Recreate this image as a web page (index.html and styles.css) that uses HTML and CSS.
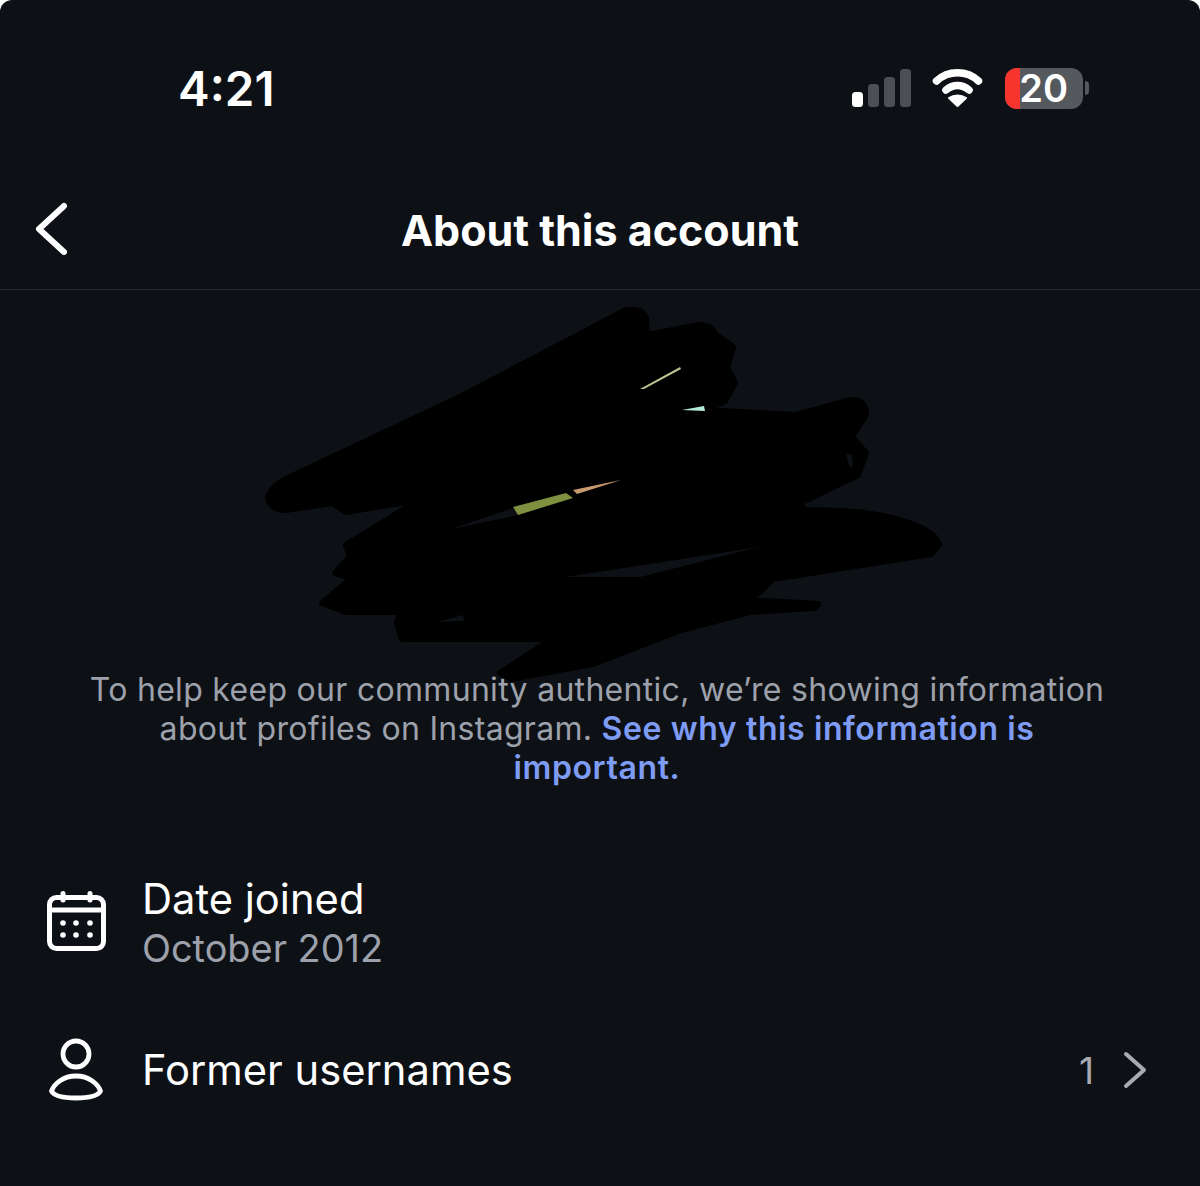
FILE: index.html
```html
<!DOCTYPE html>
<html lang="en">
<head>
    <meta charset="UTF-8">
    <meta name="viewport" content="width=device-width, initial-scale=1.0">
    <title>About this account</title>
    <link rel="stylesheet" href="styles.css">
</head>
<body>
    <div class="screen">
        <header class="status-bar">
            <span class="clock">4:21</span>
            <div class="status-icons">
                <svg class="signal" width="60" height="38" viewBox="0 0 60 38">
                    <rect x="0" y="23" width="11" height="15" rx="3.5" fill="#fff"/>
                    <rect x="16" y="15" width="11" height="23" rx="3.5" fill="#4c4f53"/>
                    <rect x="32" y="8" width="11" height="30" rx="3.5" fill="#4c4f53"/>
                    <rect x="48" y="0" width="11" height="38" rx="3.5" fill="#4c4f53"/>
                </svg>
                <svg class="wifi" width="53" height="38" viewBox="0 0 53 38">
                    <path d="M4.5 12 C16 1 35 1 46.5 12" fill="none" stroke="#fff" stroke-width="7.5" stroke-linecap="round"/>
                    <path d="M14 21 C21 15 30 15 37 21" fill="none" stroke="#fff" stroke-width="7.5" stroke-linecap="round"/>
                    <path d="M17 29 C22 25.5 29 25.5 34 29 L25.5 37 Z" fill="#fff" stroke="#fff" stroke-width="2" stroke-linejoin="round"/>
                </svg>
                <div class="battery">
                    <div class="battery-body">
                        <span class="battery-level"></span>
                        <span class="battery-text">20</span>
                    </div>
                    <span class="battery-cap"></span>
                </div>
            </div>
        </header>

        <nav class="nav-bar">
            <svg class="back" width="34" height="54" viewBox="0 0 34 54">
                <path d="M29 5 L4 28 L29 51" fill="none" stroke="#fff" stroke-width="6" stroke-linecap="round" stroke-linejoin="round"/>
            </svg>
            <h1>About this account</h1>
        </nav>

        <section class="profile-area"></section>

        <p class="notice">To help keep our community authentic, we’re showing information about profiles on Instagram. <a href="#">See why this information is important.</a></p>

        <ul class="info-list">
            <li class="info-row">
                <svg class="row-icon" width="62" height="64" viewBox="0 0 62 64">
                    <rect x="4.5" y="6.5" width="54" height="51" rx="7" fill="none" stroke="#fff" stroke-width="5"/>
                    <path d="M4.5 19 H58.5" stroke="#fff" stroke-width="5"/>
                    <path d="M18 2.5 V9 M45 2.5 V9" stroke="#fff" stroke-width="5" stroke-linecap="round"/>
                    <g fill="#fff">
                        <circle cx="18" cy="32" r="2.8"/><circle cx="31" cy="32" r="2.8"/><circle cx="45" cy="32" r="2.8"/>
                        <circle cx="18" cy="44" r="2.8"/><circle cx="31" cy="44" r="2.8"/><circle cx="45" cy="44" r="2.8"/>
                    </g>
                </svg>
                <div class="row-text">
                    <span class="row-title">Date joined</span>
                    <span class="row-sub">October 2012</span>
                </div>
            </li>
            <li class="info-row">
                <svg class="row-icon" width="62" height="64" viewBox="0 0 62 64">
                    <circle cx="31" cy="16" r="13" fill="none" stroke="#fff" stroke-width="4.8"/>
                    <path d="M31 38 C18 38 9 46 6.5 53 C9 58 18 60 31 60 C44 60 53 58 55.5 53 C53 46 44 38 31 38 Z" fill="none" stroke="#fff" stroke-width="4.8" stroke-linejoin="round"/>
                </svg>
                <span class="row-title">Former usernames</span>
                <span class="row-count">1</span>
                <svg class="chevron" width="24" height="38" viewBox="0 0 24 38">
                    <path d="M3 3 L21 19 L3 35" fill="none" stroke="#a8abb3" stroke-width="4" stroke-linecap="round" stroke-linejoin="round"/>
                </svg>
            </li>
        </ul>

        <!-- scribble over the profile picture and name -->
        <svg class="scribble" width="1200" height="1186" viewBox="0 0 1200 1186">
            <path fill="#000" stroke="#000" stroke-width="6" stroke-linejoin="round" d="M268 497 Q272 486 288 478 L460 397 L626 310 Q643 308 646 318 L647 335 L699 325 Q712 325 715 334 L733 347 L727 368 L735 383 L725 401 L704 410 L796 415 L851 400 Q866 399 866 415 L852 437 L866 453 L858 475 L802 502 L802 510 Q855 510 883 516 Q935 527 939 545 L931 554 L773 579 L761 591 L748 600 L818 604 L815 608 L750 612 L681 630 L593 664 L511 679 L500 673 L552 639 L402 639 L397 623 L400 612 L346 612 L322 603 L352 578 L335 573 L350 557 L346 545 L419 500 L346 512 L332 503 L286 510 Q270 510 268 497 Z"/>
            <path fill="#0d1116" d="M451 529 L513 508 L518 515 Z M566 577 L759 547 L640 577 Z M437 622 L463 615 L464 621 Z M846 453 L852 455 L853 467 L849 466 Z"/>
            <path fill="#7f9040" d="M513 507 L566 493 L573 498 L518 515 Z"/>
            <path fill="#c89a70" d="M573 490 L621 480 L577 494 Z"/>
            <path fill="#b9c48f" d="M640 389 L680 367 L681 369 L644 389 Z"/>
            <path fill="#b5ecd5" d="M682 410 L704 406 L705 411 Z"/>
        </svg>
    </div>
</body>
</html>
```

FILE: styles.css
```css
* {
    box-sizing: border-box;
}
body {
    margin: 0;
    background-color: #fff;
    font-family: "Inter", "Liberation Sans", sans-serif;
}
.screen {
    position: relative;
    width: 1200px;
    height: 1186px;
    overflow: hidden;
    background-color: #0d1116;
    border-radius: 12px 12px 0 0;
    color: #fff;
}
.status-bar {
    display: flex;
    align-items: center;
    justify-content: space-between;
    height: 176px;
    padding: 0 111px 0 178px;
}
.clock {
    margin-top: 2px;
    font-size: 47.5px;
    font-weight: 600;
    line-height: 1;
}
.status-icons {
    display: flex;
    align-items: center;
    gap: 20px;
}
.battery {
    display: flex;
    align-items: center;
    gap: 2px;
}
.battery-body {
    position: relative;
    display: flex;
    justify-content: flex-end;
    align-items: center;
    width: 78px;
    height: 41px;
    padding-right: 15px;
    background-color: #55585c;
    border-radius: 12px;
}
.battery-level {
    position: absolute;
    left: 0;
    top: 0;
    bottom: 0;
    width: 15px;
    background-color: #f7352e;
    border-radius: 12px 0 0 12px;
}
.battery-text {
    position: relative;
    font-size: 38px;
    font-weight: 600;
    line-height: 1;
}
.battery-cap {
    width: 4px;
    height: 14px;
    background-color: #55585c;
    border-radius: 0 4px 4px 0;
}
.nav-bar {
    position: relative;
    display: flex;
    justify-content: center;
    align-items: center;
    height: 114px;
    padding-bottom: 6px;
    border-bottom: 1px solid #25282d;
}
.back {
    position: absolute;
    left: 35px;
    top: 25px;
}
.nav-bar h1 {
    margin: 0;
    font-size: 43px;
    font-weight: 700;
}
.profile-area {
    height: 380px;
}
.notice {
    width: 1020px;
    margin: 0 0 0 87px;
    font-size: 32px;
    line-height: 39px;
    letter-spacing: 0.3px;
    text-align: center;
    color: #9da1ab;
}
.notice a {
    color: #7f9cf5;
    font-weight: 600;
    letter-spacing: 0.6px;
    text-decoration: none;
}
.info-list {
    list-style: none;
    margin: 0;
    padding: 87px 53px 0 45px;
}
.info-row {
    display: flex;
    align-items: center;
    gap: 35px;
    height: 98px;
    margin-bottom: 49px;
}
.row-text {
    display: flex;
    flex-direction: column;
    margin-top: 2px;
}
.row-title {
    font-size: 41.7px;
    line-height: 49px;
}
.row-sub {
    font-size: 37.9px;
    line-height: 49px;
    color: #9da1ab;
}
.row-count {
    margin-left: auto;
    font-size: 37px;
    color: #a8abb3;
}
.chevron {
    margin-left: -6px;
}
.scribble {
    position: absolute;
    left: 0;
    top: 0;
    pointer-events: none;
}
```
